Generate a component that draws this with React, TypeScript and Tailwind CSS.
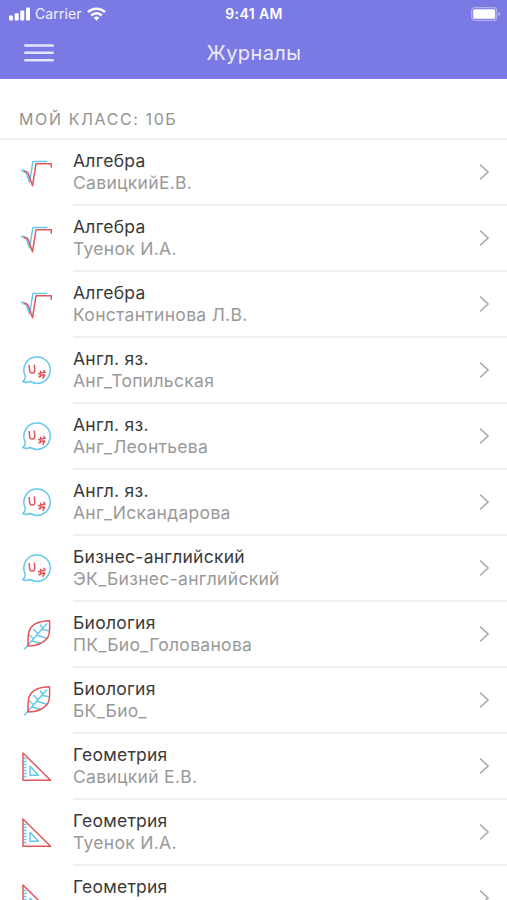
import React from 'react';

type Subject = 'algebra' | 'english' | 'biology' | 'geometry';

interface Journal {
  subject: Subject;
  title: string;
  teacher?: string;
}

const journals: Journal[] = [
  { subject: 'algebra', title: 'Алгебра', teacher: 'СавицкийЕ.В.' },
  { subject: 'algebra', title: 'Алгебра', teacher: 'Туенок И.А.' },
  { subject: 'algebra', title: 'Алгебра', teacher: 'Константинова Л.В.' },
  { subject: 'english', title: 'Англ. яз.', teacher: 'Анг_Топильская' },
  { subject: 'english', title: 'Англ. яз.', teacher: 'Анг_Леонтьева' },
  { subject: 'english', title: 'Англ. яз.', teacher: 'Анг_Искандарова' },
  { subject: 'english', title: 'Бизнес-английский', teacher: 'ЭК_Бизнес-английский' },
  { subject: 'biology', title: 'Биология', teacher: 'ПК_Био_Голованова' },
  { subject: 'biology', title: 'Биология', teacher: 'БК_Био_' },
  { subject: 'geometry', title: 'Геометрия', teacher: 'Савицкий Е.В.' },
  { subject: 'geometry', title: 'Геометрия', teacher: 'Туенок И.А.' },
  { subject: 'geometry', title: 'Геометрия' },
];

const RED = '#e0565c';
const BLUE = '#66c9ec';

const drawings: Record<Subject, React.ReactNode> = {
  algebra: (
    <>
      <path d="M.8 13.500h3.700l1.700 2.200L9.600 25 12.900 4.500h14.600" stroke={BLUE} />
      <path d="M3.300 14.800h3.400l1.600 2 4.200 12L16 6.800h15.300v3.900" stroke={RED} />
    </>
  ),
  english: (
    <>
      <path d="M5.300 21.200A13.200 13.200 0 1 1 10.300 26.500C8.200 27.600 5.500 27.700 2.700 26.500 4.600 25.200 5.400 23.600 5.300 21.200Z" stroke={BLUE} />
      <path d="M9.200 10l.4 5.500c.4 3.800 5.400 3.300 5.200-.5L14.300 9.500" stroke={RED} />
      <path d="M18 18.800l7.800-1.800M20.800 15.800c-.2 2.500-.4 4.500-.2 6.500M24 14.800c.3 3.500 0 6-1 9.200M18.600 22.300c1.800-2.200 5.400-2.800 6.600-1" stroke={RED} />
    </>
  ),
  biology: (
    <>
      <path d="M4.300 30.300L27 4.500M8.800 15.500l5.200 4.500M13.300 10l5.200 5.200M20 5.500l2.800 4M12 22l9.500 2.700M17 16.300l9.800 3M22 10.500l7 1.200" stroke={BLUE} />
      <path d="M29.500 1.700C19.500 2 11 5.500 9 12.500 7.500 17.500 8.200 22.500 8 27 15.500 27 22.500 25 27 19.500 31 14.500 29.500 7.500 29.500 1.700Z" stroke={RED} />
    </>
  ),
  geometry: (
    <>
      <path d="M4 7.500h2.500M4 10.500h2.500M4 13.500h2.500M4 16.500h2.500M4 19.500h2.500M4 22.500h2.500M4 25.500h2.500M10 15.300v9h8.500Z" stroke={BLUE} />
      <path d="M3 2v27.300h27.500Z" stroke={RED} />
    </>
  ),
};

function SubjectIcon({ subject }: { subject: Subject }) {
  return (
    <svg className="h-8 w-8 shrink-0" viewBox="0 0 32 32" fill="none" strokeWidth="1.500" strokeLinejoin="round">
      {drawings[subject]}
    </svg>
  );
}

function StatusBar() {
  return (
    <div className="grid h-[27px] grid-cols-3 items-center pl-[9px] pr-[6px] text-white">
      <div className="flex items-center">
        <svg className="h-[14px] w-[22px]" viewBox="0 0 22 14" fill="currentColor">
          <rect x="0" y="8.500" width="4" height="5" rx="1" />
          <rect x="5.700" y="6.300" width="4" height="7.200" rx="1" />
          <rect x="11.300" y="3.500" width="4" height="10" rx="1" />
          <rect x="17" y="0.500" width="4" height="13" rx="1" />
        </svg>
        <span className="ml-1 text-[14px] leading-none tracking-[0.1px] text-white/90">Carrier</span>
        <svg className="ml-[5px] h-[14px] w-[19px]" viewBox="0 0 19 14" fill="none" stroke="currentColor" strokeWidth="2.500">
          <path d="M1 5.200a12 12 0 0 1 17 0M4.200 8.500a7.500 7.500 0 0 1 10.600 0" />
          <path d="M9.500 13.700l-2.800-2.900a4 4 0 0 1 5.600 0Z" fill="currentColor" stroke="none" />
        </svg>
      </div>
      <div className="-ml-[2px] text-center text-[14px] leading-none font-semibold tracking-[0.4px]">9:41 AM</div>
      <svg className="h-[14px] w-[30px] justify-self-end" viewBox="0 0 30 14">
        <rect x="0.700" y="0.700" width="25" height="12.600" rx="3" fill="none" stroke="#fff" strokeOpacity="0.400" strokeWidth="1.200" />
        <rect x="2.200" y="2.200" width="22" height="9.600" rx="1.500" fill="#fff" />
        <path d="M27.300 4.800c2.300.8 2.300 3.600 0 4.400Z" fill="#fff" fillOpacity="0.400" />
      </svg>
    </div>
  );
}

function NavBar() {
  return (
    <div className="grid h-[51px] grid-cols-[54px_1fr_54px] items-center">
      <button aria-label="Меню" className="flex flex-col pl-[23.5px]">
        <svg className="h-[20px] w-[30px]" viewBox="0 0 30 20" stroke="#fff" strokeOpacity="0.800" strokeWidth="2.500" strokeLinecap="round">
          <path d="M1.300 2.500h27.400M1.300 9.800h27.400M1.300 17.200h27.400" />
        </svg>
      </button>
      <h1 className="pl-px text-center text-[20px] leading-none tracking-[0.4px] text-white/85">Журналы</h1>
    </div>
  );
}

function JournalRow({ subject, title, teacher }: Journal) {
  return (
    <li className="flex h-[66px] pl-5">
      <div className="flex w-[53px] items-center">
        <SubjectIcon subject={subject} />
      </div>
      <div className="flex flex-1 items-center justify-between border-b-2 border-[#efefef] pr-[17px]">
        <div className="h-11 text-[17.5px] leading-[22px]">
          <div className="tracking-[0.25px] text-[#3a3a3a]">{title}</div>
          {teacher && <div className="tracking-[0.3px] text-[#999]">{teacher}</div>}
        </div>
        <svg className="h-[18px] w-3" viewBox="0 0 12 18" fill="none" stroke="#a9a9a9" strokeWidth="1.600">
          <path d="M2 1.500l8 7.500-8 7.500" />
        </svg>
      </div>
    </li>
  );
}

export default function App() {
  return (
    <div className="h-[900px] w-[507px] overflow-hidden bg-white font-['Inter','Liberation_Sans',sans-serif]">
      <header className="h-[79px] bg-[#7b7ae5]">
        <StatusBar />
        <NavBar />
      </header>
      <h2 className="flex h-[61px] items-end border-b-2 border-[#efefef] pb-[8px] pl-[19px] text-[16px] leading-[22px] tracking-[1.6px] text-[#939393]">
        МОЙ КЛАСС: 10Б
      </h2>
      <ul>
        {journals.map((journal, index) => (
          <JournalRow key={index} {...journal} />
        ))}
      </ul>
    </div>
  );
}
